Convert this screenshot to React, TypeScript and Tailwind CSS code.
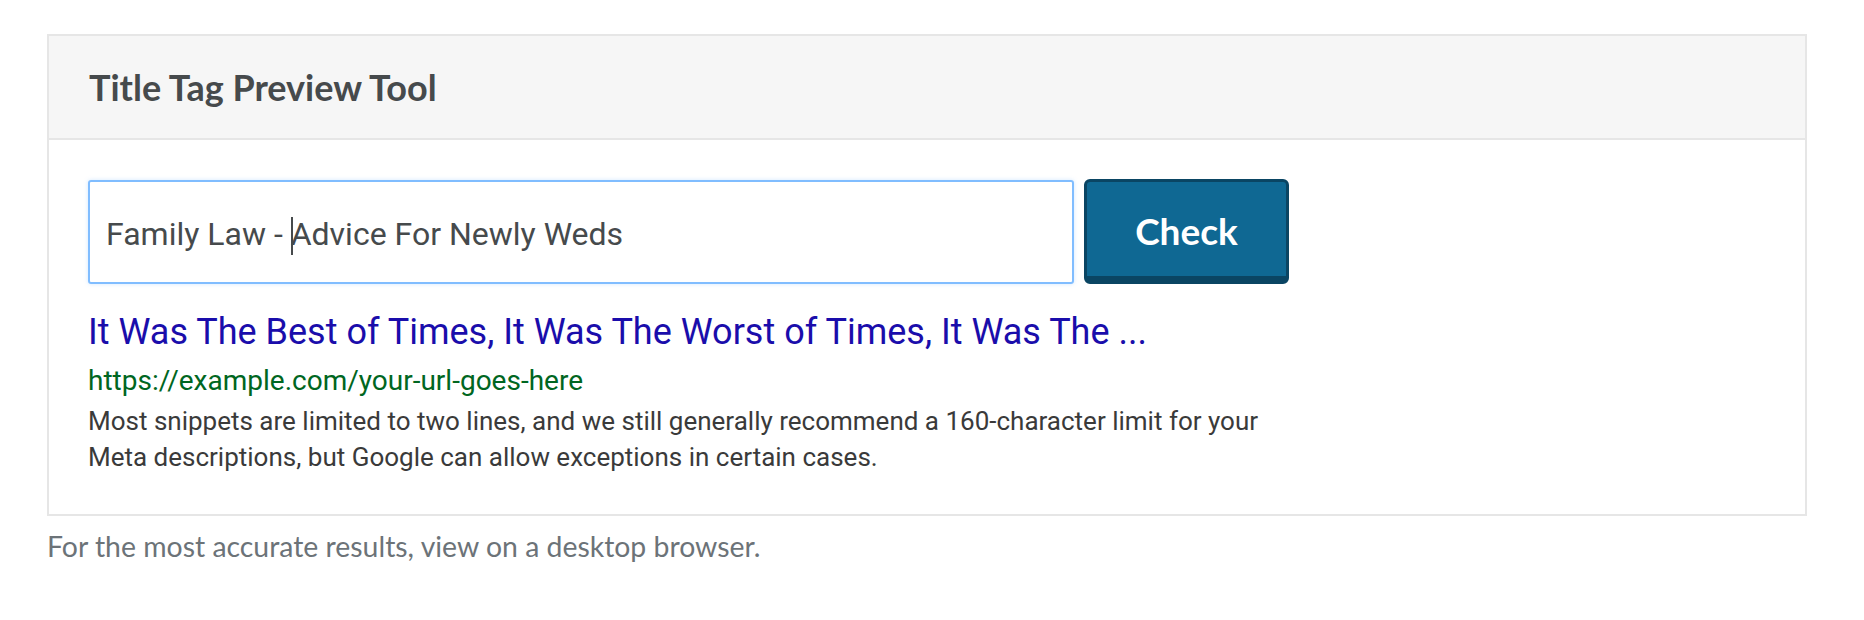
import React from "react";

export default function App() {
  return (
    <div className="w-[1864px] h-[620px] bg-white pt-[34px] pl-[47px]">
      <div className="w-[1760px] border-2 border-[#e6e6e6] bg-white">
        <div className="h-[104px] bg-[#f6f6f6] border-b-2 border-[#e6e6e6] flex items-center pl-[40px]">
          <h1
            className="text-[36px] font-bold text-[#464a4c] leading-none"
            style={{ fontFamily: "Lato, 'Liberation Sans', sans-serif" }}
          >
            Title Tag Preview Tool
          </h1>
        </div>
        <div className="pl-[39px] pt-[40px] pb-[39px]">
          <div className="flex gap-[10px]">
            <div className="w-[986px] h-[104px] border-2 border-[#80bdff] rounded-[3px] shadow-[0_0_4px_rgba(128,189,255,0.35)] flex items-center pl-[16px]">
              <span
                className="text-[32px] text-[#464a4c] leading-none pt-[9px]"
                style={{ fontFamily: "Roboto, 'Liberation Sans', sans-serif" }}
              >
                Family Law -{" "}
                <span className="inline-block w-[2px] h-[38px] bg-[#464a4c] align-middle -mr-[2px] relative -top-[1px]"></span>
                Advice For Newly Weds
              </span>
            </div>
            <button
              className="w-[205px] h-[105px] -mt-[1px] bg-[#0f6893] border-[3px] border-b-[8px] border-[#0a4563] rounded-[6px] text-white text-[37px] font-bold flex items-center justify-center pt-[4px]"
              style={{ fontFamily: "Lato, 'Liberation Sans', sans-serif" }}
            >
              Check
            </button>
          </div>
          <div style={{ fontFamily: "Roboto, 'Liberation Sans', sans-serif" }}>
            <div className="mt-[28px] text-[36px] leading-[40px] text-[#1a0dab]">
              It Was The Best of Times, It Was The Worst of Times, It Was The ...
            </div>
            <div className="mt-[11px] text-[28px] leading-[36px] text-[#006621]">
              https://example.com/your-url-goes-here
            </div>
            <div className="mt-[4px] text-[26px] leading-[36px] text-[#3a3a3a] w-[1400px]">
              Most snippets are limited to two lines, and we still generally recommend a 160-character limit for your
              <br />
              Meta descriptions, but Google can allow exceptions in certain cases.
            </div>
          </div>
        </div>
      </div>
      <p
        className="mt-[12px] text-[28.4px] leading-[36px] text-[#6c7378]"
        style={{ fontFamily: "Lato, 'Liberation Sans', sans-serif" }}
      >
        For the most accurate results, view on a desktop browser.
      </p>
    </div>
  );
}
